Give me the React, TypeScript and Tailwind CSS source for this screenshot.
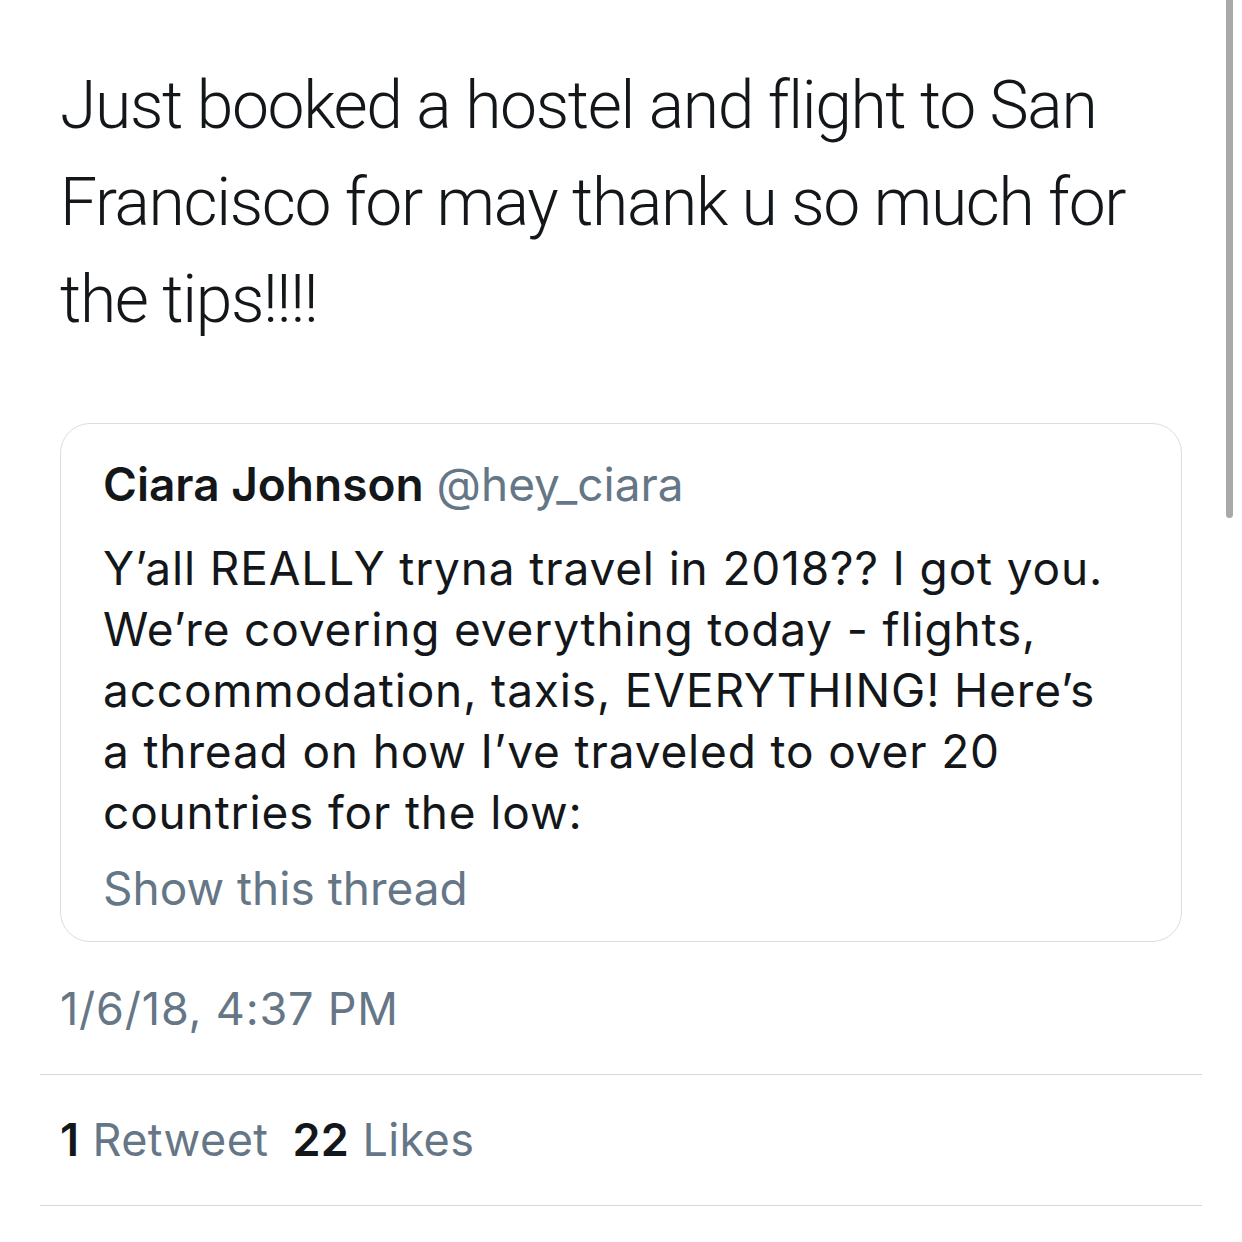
import React from "react";

export default function App() {
    return (
        <div className="relative w-[1242px] h-[1242px] overflow-hidden bg-white font-['Inter',sans-serif] text-[#14171a]">
            {/* scrollbar */}
            <div className="absolute right-[9px] top-0 w-[7px] h-[518px] rounded-b-full bg-[#a9a9a9]" />

            <div className="px-[40px]">
                <div className="px-[20px] pt-[57px]">
                    <p className="font-['Roboto',sans-serif] text-[66px] leading-[97px] font-light tracking-[-1.35px]">
                        Just booked a hostel and flight to San
                        <br />
                        Francisco for may thank u so much for
                        <br />
                        the tips!!!!
                    </p>

                    {/* quoted tweet */}
                    <div className="mt-[75px] w-[1122px] rounded-[30px] border border-[#d8dee3] pl-[42px] pr-[20px] pt-[30px] pb-[22px]">
                        <div className="text-[46px] leading-[61px] whitespace-nowrap">
                            <span className="font-semibold text-[#14171a]">Ciara Johnson</span>{" "}
                            <span className="text-[#657786]">@hey_ciara</span>
                        </div>
                        <p className="mt-[23px] text-[46px] leading-[61px] tracking-[0.85px] text-[#14171a] whitespace-nowrap">
                            Y’all REALLY tryna travel in 2018?? I got you.
                            <br />
                            We’re covering everything today - flights,
                            <br />
                            accommodation, taxis, EVERYTHING! Here’s
                            <br />
                            a thread on how I’ve traveled to over 20
                            <br />
                            countries for the low:
                        </p>
                        <div className="mt-[15px] text-[46px] leading-[61px] text-[#657786]">Show this thread</div>
                    </div>

                    <div className="mt-[37px] text-[45px] leading-[60px] tracking-[0.8px] text-[#657786]">1/6/18, 4:37 PM</div>
                </div>

                <div className="mt-[35px] border-t border-[#d6d9dc]" />

                <div className="px-[20px] pt-[35px] pb-[35px] text-[45px] leading-[60px] tracking-[0.4px]">
                    <span className="font-semibold text-[#14171a]">1</span>{" "}
                    <span className="text-[#657786]">Retweet</span>
                    <span className="ml-[24px] font-semibold text-[#14171a]">22</span>{" "}
                    <span className="text-[#657786]">Likes</span>
                </div>

                <div className="border-t border-[#d6d9dc]" />
            </div>
        </div>
    );
}
